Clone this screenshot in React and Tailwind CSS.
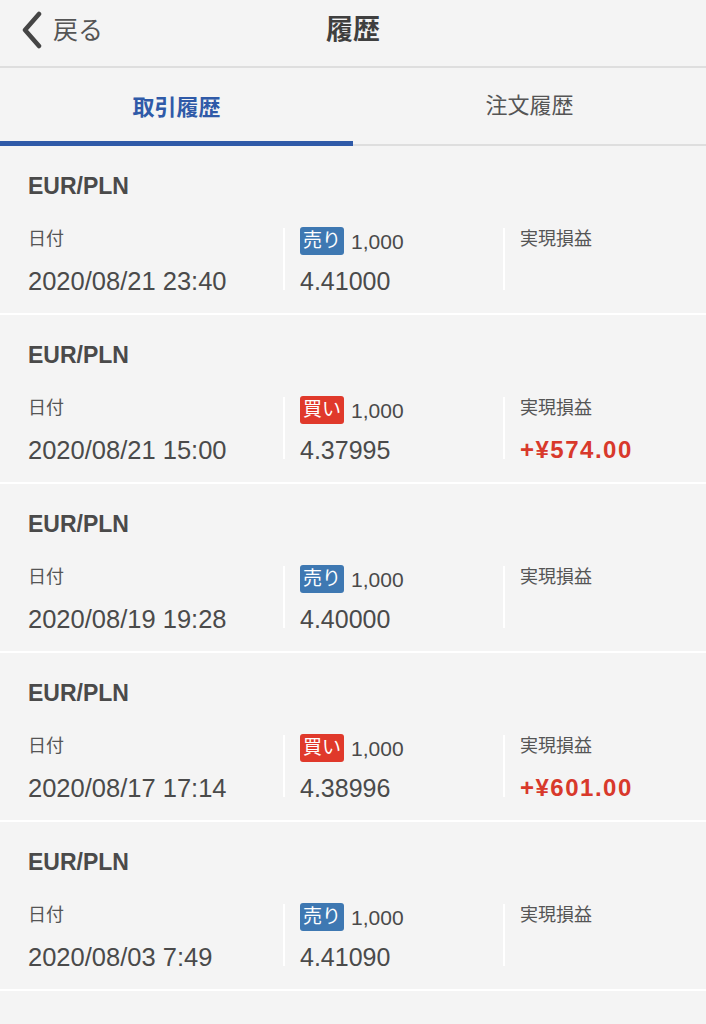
const trades = [
  { date: "2020/08/21 23:40", side: "sell", price: "4.41000", pl: "" },
  { date: "2020/08/21 15:00", side: "buy", price: "4.37995", pl: "+¥574.00" },
  { date: "2020/08/19 19:28", side: "sell", price: "4.40000", pl: "" },
  { date: "2020/08/17 17:14", side: "buy", price: "4.38996", pl: "+¥601.00" },
  { date: "2020/08/03 7:49", side: "sell", price: "4.41090", pl: "" },
];

const font = {
  fontFamily: '"Liberation Sans", "Noto Sans CJK JP", sans-serif',
};

const TradeRow = ({ trade }) => {
  const isBuy = trade.side === "buy";
  return (
    <div className="h-[169px] border-b-2 border-white px-[28px] pt-[24px]">
      <p className="h-[32px] leading-[32px] text-[23px] font-bold text-[#4a4a4a]">
        EUR/PLN
      </p>

      <div className="mt-[26px] flex">
        {/* 日付 */}
        <div className="w-[255px] h-[62px] flex flex-col">
          <span className="h-[24px] leading-[24px] text-[18px] text-[#555] -translate-y-[1px]">日付</span>
          <span className="mt-auto text-[25.5px] leading-[28px] text-[#4a4a4a] translate-y-[5px]">
            {trade.date}
          </span>
        </div>

        {/* 売買・数量 */}
        <div className="w-[220px] h-[62px] border-l-2 border-white pl-[15px] flex flex-col">
          <div className="flex items-center gap-[7px] h-[28px] -mt-px">
            <span
              className={`h-[28px] px-[3px] rounded-[3px] text-white text-[19px] leading-[28px] ${
                isBuy ? "bg-[#e0392b]" : "bg-[#3e78b2]"
              }`}
            >
              {isBuy ? "買い" : "売り"}
            </span>
            <span className="text-[21px] text-[#4a4a4a] translate-y-[1px]">1,000</span>
          </div>
          <span className="mt-auto text-[25px] leading-[28px] text-[#4a4a4a] translate-y-[5px]">
            {trade.price}
          </span>
        </div>

        {/* 実現損益 */}
        <div className="flex-1 h-[62px] border-l-2 border-white pl-[15px] flex flex-col">
          <span className="h-[24px] leading-[24px] text-[18px] text-[#555] -translate-y-[1px]">実現損益</span>
          {trade.pl && (
            <span className="mt-auto text-[24px] leading-[28px] font-bold tracking-[1.5px] text-[#d8392b] translate-y-[5px]">
              {trade.pl}
            </span>
          )}
        </div>
      </div>
    </div>
  );
};

const App = () => {
  return (
    <div className="w-[706px] min-h-[1024px] bg-[#f4f4f4]" style={font}>
      {/* Header */}
      <header className="relative h-[68px] border-b-2 border-[#dedede] flex items-start pt-[12px]">
        <div className="flex items-center h-[36px] pl-[20px]">
          <svg width="24" height="38" viewBox="0 0 24 38" fill="none" className="mr-[9px]">
            <path
              d="M19 3 L5 19 L19 35"
              stroke="#454545"
              strokeWidth="4.5"
              strokeLinecap="round"
              strokeLinejoin="round"
            />
          </svg>
          <span className="text-[25px] leading-[36px] text-[#555]">戻る</span>
        </div>
        <h1 className="absolute left-0 right-0 top-[12px] h-[36px] leading-[36px] text-center text-[27px] font-bold text-[#3f3f3f]">
          履歴
        </h1>
      </header>

      {/* Tabs */}
      <nav className="flex h-[78px] border-b-2 border-[#dedede]">
        <div className="w-[353px] flex flex-col">
          <span className="flex-1 flex items-center justify-center pt-[6px] text-[22px] font-bold text-[#2f5aa8]">
            取引履歴
          </span>
          <div className="h-[5px] bg-[#2f5aa8] -mb-[2px]" />
        </div>
        <div className="flex-1 flex items-center justify-center pb-[1px] text-[22px] text-[#555]">
          注文履歴
        </div>
      </nav>

      {trades.map((t, i) => (
        <TradeRow key={i} trade={t} />
      ))}
    </div>
  );
};

export default App;
